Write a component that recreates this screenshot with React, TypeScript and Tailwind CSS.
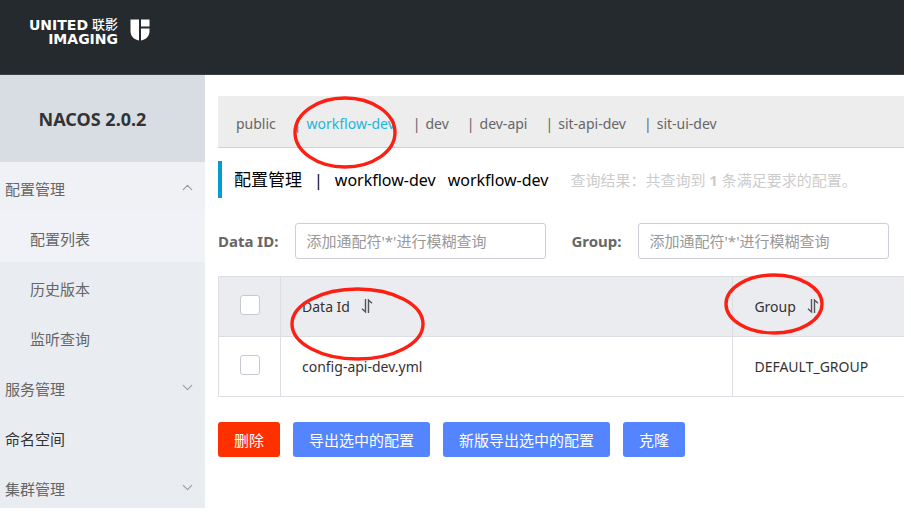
import { ChevronDown, ChevronUp } from "lucide-react";

const tabs = ["public", "workflow-dev", "dev", "dev-api", "sit-api-dev", "sit-ui-dev"];
const current = "workflow-dev";

function Ring({ className }: { className: string }) {
  return (
    <svg
      className={`pointer-events-none absolute z-10 overflow-visible ${className}`}
      viewBox="0 0 100 100"
      preserveAspectRatio="none"
      aria-hidden="true"
    >
      <ellipse cx="50" cy="50" rx="50" ry="50" fill="none" stroke="#fb2013" strokeWidth="3.4" vectorEffect="non-scaling-stroke" />
    </svg>
  );
}

function SortIcon() {
  return (
    <svg className="mb-0.5 h-4 w-3.5" viewBox="0 0 14 16" fill="none" stroke="#55555e" strokeWidth="1.4" aria-hidden="true">
      <path d="M5.5 1V14L2 10.8" />
      <path d="M8.5 15V2L12 5.2" />
    </svg>
  );
}

function Logo() {
  return (
    <div className="flex items-start gap-3 text-white">
      <div className="flex flex-col items-end font-['DejaVu_Sans','Noto_Sans_CJK_SC',sans-serif] text-sm leading-[14px] font-bold">
        <div className="flex h-[14px] items-center gap-1">
          <span>UNITED</span>
          <span className="text-[13px] font-medium">联影</span>
        </div>
        <span>IMAGING</span>
      </div>
      <svg className="mt-px h-[22px] w-5" viewBox="0 0 20 22" fill="#fff" aria-hidden="true">
        <path d="M0.5 0.5H9V21.5C3.8 20.6 0.5 17.2 0.5 12Z" />
        <path d="M11 0.5H19.5V7.5H11Z" />
        <path d="M11 9.5H19.5V12C19.5 17.2 16.2 20.6 11 21.5Z" />
      </svg>
    </div>
  );
}

function MenuItem({ label, open, dark }: { label: string; open?: boolean; dark?: boolean }) {
  return (
    <li>
      <button
        type="button"
        className={`flex h-[50px] w-full items-center justify-between pt-1 pr-[9px] pl-[5px] text-left ${open ? "bg-[#f0f1f5]" : ""} ${dark ? "text-[#333]" : "text-[#666]"}`}
      >
        <span>{label}</span>
        {!dark &&
          (open ? (
            <ChevronUp className="mb-1 size-[17px] text-[#999]" strokeWidth={1.5} />
          ) : (
            <ChevronDown className="mb-1 size-[17px] text-[#999]" strokeWidth={1.5} />
          ))}
      </button>
    </li>
  );
}

function SubItem({ label, active }: { label: string; active?: boolean }) {
  return (
    <li>
      <a href="#" className={`flex h-[50px] items-center pt-1 pl-[30px] text-[#666] ${active ? "bg-[#f1f2f7]" : ""}`}>
        {label}
      </a>
    </li>
  );
}

function Search({ id, label }: { id: string; label: string }) {
  return (
    <div className="flex items-center gap-[17px]">
      <label htmlFor={id} className="font-bold text-[#666]">
        {label}
      </label>
      <input
        id={id}
        placeholder="添加通配符'*'进行模糊查询"
        className="h-9 w-[251px] rounded-[3px] border border-[#cdced8] bg-white px-2.5 text-[#333] outline-none placeholder:text-[#999]"
      />
    </div>
  );
}

function Check({ label }: { label: string }) {
  return (
    <input
      type="checkbox"
      aria-label={label}
      className="mx-auto mb-1 block size-5 appearance-none rounded-[3px] border border-[#c6c9d2] bg-white"
    />
  );
}

export default function App() {
  return (
    <div className="flex h-screen flex-col overflow-hidden bg-white pr-[7px] pb-[11px] font-['Noto_Sans','Noto_Sans_CJK_SC',sans-serif] text-[15px] leading-5">
      <header className="h-[75px] shrink-0 border-b border-[#3b4045] bg-[#252a2f] pt-[18px] pl-[29px]">
        <Logo />
      </header>
      <div className="flex min-h-0 flex-1">
        <aside className="w-[205px] shrink-0 overflow-hidden bg-[#e9edf1]">
          <h1 className="flex h-[87px] items-center justify-center bg-[#d8dde3] pr-5 text-lg font-bold text-[#333]">NACOS 2.0.2</h1>
          <nav>
            <ul>
              <MenuItem label="配置管理" open />
              <SubItem label="配置列表" active />
              <SubItem label="历史版本" />
              <SubItem label="监听查询" />
              <MenuItem label="服务管理" />
              <MenuItem label="命名空间" dark />
              <MenuItem label="集群管理" />
            </ul>
          </nav>
        </aside>
        <main className="min-w-0 flex-1 overflow-hidden pt-[21px] pl-[13px]">
          <ul className="flex h-[52px] items-center gap-[18px] border-b border-[#d2d2d2] bg-[#ededed] pt-1 pl-[18px] text-sm text-[#666]">
            {tabs.map((tab, i) => (
              <li key={tab} className="relative flex gap-[5px]">
                {i > 0 && <span>|</span>}
                <a href="#" className={tab === current ? "text-[#22b5dc]" : ""}>
                  {tab}
                </a>
                {tab === current && <Ring className="-top-4 left-px h-[69px] w-[100px]" />}
              </li>
            ))}
          </ul>
          <div className="mt-[13px] flex h-[37px] items-center border-l-4 border-[#039dd3] pl-3 whitespace-nowrap">
            <h2 className="flex items-center gap-3 text-base text-black">
              <span className="text-[17px]">配置管理</span>
              <span>|</span>
              <span>workflow-dev</span>
              <span>workflow-dev</span>
            </h2>
            <p className="ml-[22px] text-[#ccc]">
              查询结果：共查询到 <strong>1</strong> 条满足要求的配置。
            </p>
          </div>
          <form className="mt-[25px] flex gap-[25px]">
            <Search id="data-id" label="Data ID:" />
            <Search id="group" label="Group:" />
          </form>
          <table className="mt-[17px] w-full table-fixed border-collapse border border-r-0 border-[#dcdee3] text-left text-sm text-[#333]">
            <colgroup>
              <col className="w-[62px]" />
              <col className="w-[66%]" />
              <col />
            </colgroup>
            <thead className="bg-[#ebecf0]">
              <tr className="h-[60px] border-b border-[#dcdee3]">
                <th className="border-r border-[#dcdee3]">
                  <Check label="全选" />
                </th>
                <th className="border-r border-[#dcdee3] pl-[21px] font-normal">
                  <div className="relative flex items-center gap-2.5">
                    Data Id <SortIcon />
                    <Ring className="-top-2 -left-2.5 h-[70px] w-[131px]" />
                  </div>
                </th>
                <th className="pl-[21px] font-normal">
                  <div className="relative flex items-center gap-2.5">
                    Group <SortIcon />
                    <Ring className="-top-[22px] -left-7 h-[58px] w-[96px]" />
                  </div>
                </th>
              </tr>
            </thead>
            <tbody>
              <tr className="h-[60px]">
                <td className="border-r border-[#dcdee3]">
                  <Check label="config-api-dev.yml" />
                </td>
                <td className="border-r border-[#dcdee3] pl-[21px]">config-api-dev.yml</td>
                <td className="pl-[21px]">DEFAULT_GROUP</td>
              </tr>
            </tbody>
          </table>
          <div className="mt-[25px] flex gap-[13px] text-white">
            <button type="button" className="h-[35px] rounded-[3px] bg-[#ff3000] px-4">删除</button>
            <button type="button" className="h-[35px] rounded-[3px] bg-[#5584ff] px-4">导出选中的配置</button>
            <button type="button" className="h-[35px] rounded-[3px] bg-[#5584ff] px-4">新版导出选中的配置</button>
            <button type="button" className="h-[35px] rounded-[3px] bg-[#5584ff] px-4">克隆</button>
          </div>
        </main>
      </div>
    </div>
  );
}
